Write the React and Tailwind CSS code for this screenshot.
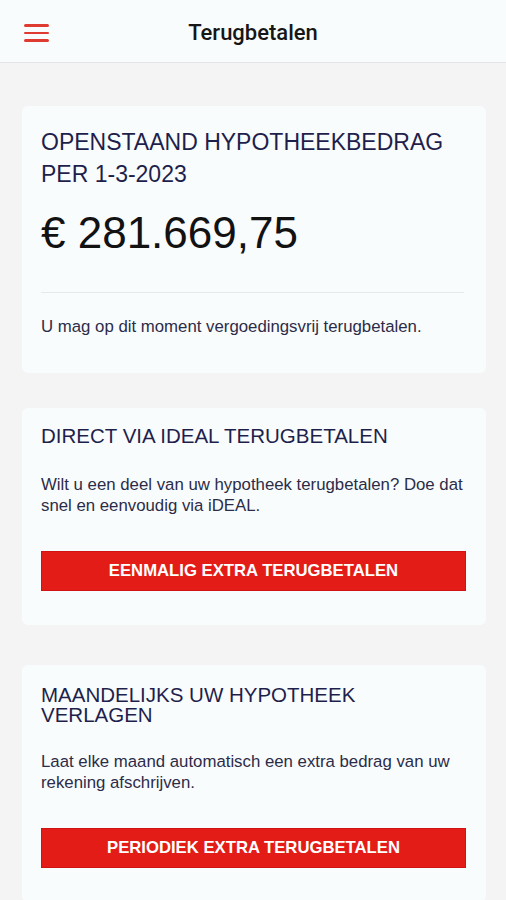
import React from "react";

function Card({ className = "", children }) {
  return (
    <div className={"rounded-md bg-[#f9fcfd] px-[19px] " + className}>{children}</div>
  );
}

function RedButton({ children }) {
  return (
    <button className="mt-[35px] flex h-[40px] w-full items-center justify-center border border-[#d01414] bg-[#e41c18] text-[16.7px] font-bold text-white font-['Liberation_Sans',Arial,sans-serif]">
      {children}
    </button>
  );
}

export default function App() {
  return (
    <div className="min-h-[900px] bg-[#f4f4f4] font-['Liberation_Sans',Arial,sans-serif]">
      <header className="relative flex h-[63px] items-center justify-center border-b border-[#e2e4e5] bg-[#f8fcfd] pt-[3px]">
        <div className="absolute left-[24px] top-[24px] flex w-[25px] flex-col gap-[5px]">
          <span className="block h-[2.5px] w-full rounded-full bg-[#df3b31]" />
          <span className="block h-[2.5px] w-full rounded-full bg-[#df3b31]" />
          <span className="block h-[2.5px] w-full rounded-full bg-[#df3b31]" />
        </div>
        <h1 className="font-['Roboto',sans-serif] text-[22px] font-medium text-[#161616]">
          Terugbetalen
        </h1>
      </header>

      <main className="flex flex-col pl-[22px] pr-[20px] pt-[43px]">
        <Card className="pt-[20px] pb-[36px]">
          <h2 className="text-[23px] leading-[32px] text-[#1f1f4c]">
            OPENSTAAND HYPOTHEEKBEDRAG PER 1-3-2023
          </h2>
          <div className="mt-[16px] text-[44px] leading-[53px] text-[#121212]">
            € 281.669,75
          </div>
          <div className="mt-[33px] h-px w-[423px] bg-[#e5e9eb]" />
          <p className="mt-[23px] text-[16.8px] leading-[21px] text-[#2c2c48]">
            U mag op dit moment vergoedingsvrij terugbetalen.
          </p>
        </Card>

        <Card className="mt-[35px] pt-[18px] pb-[34px]">
          <h3 className="text-[20.5px] leading-[20px] text-[#1f1f4c]">
            DIRECT VIA IDEAL TERUGBETALEN
          </h3>
          <p className="mt-[28px] text-[16.8px] leading-[21px] text-[#2c2c48]">
            Wilt u een deel van uw hypotheek terugbetalen? Doe dat snel en eenvoudig via iDEAL.
          </p>
          <div className="pr-[1px]">
            <RedButton>EENMALIG EXTRA TERUGBETALEN</RedButton>
          </div>
        </Card>

        <Card className="mt-[40px] pt-[20px] pb-[34px]">
          <h3 className="text-[20.5px] leading-[20px] text-[#1f1f4c]">
            MAANDELIJKS UW HYPOTHEEK VERLAGEN
          </h3>
          <p className="mt-[26px] text-[16.8px] leading-[21px] text-[#2c2c48]">
            Laat elke maand automatisch een extra bedrag van uw rekening afschrijven.
          </p>
          <div className="pr-[1px]">
            <RedButton>PERIODIEK EXTRA TERUGBETALEN</RedButton>
          </div>
        </Card>
      </main>
    </div>
  );
}
